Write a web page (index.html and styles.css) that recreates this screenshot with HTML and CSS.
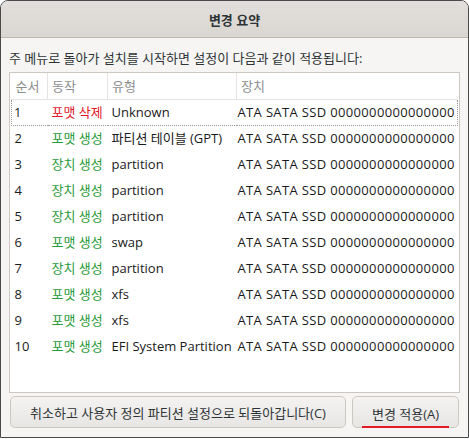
FILE: index.html
```html
<!DOCTYPE html>
<html lang="ko">
<head>
<meta charset="utf-8">
<link rel="stylesheet" href="styles.css">
</head>
<body>
<div class="window">
  <div class="titlebar">변경 요약</div>
  <div class="content">
    <div class="label">주 메뉴로 돌아가 설치를 시작하면 설정이 다음과 같이 적용됩니다:</div>
    <div class="list">
      <table class="tbl">
        <colgroup><col class="c1"><col class="c2"><col class="c3"><col class="c4"></colgroup>
        <thead>
          <tr><th>순서</th><th>동작</th><th>유형</th><th class="last">장치</th></tr>
        </thead>
        <tbody>
          <tr class="focus"><td>1</td><td class="red">포맷 삭제</td><td>Unknown</td><td class="dev">ATA SATA SSD 0000000000000000</td></tr>
          <tr><td>2</td><td class="green">포맷 생성</td><td>파티션 테이블 (GPT)</td><td class="dev">ATA SATA SSD 0000000000000000</td></tr>
          <tr><td>3</td><td class="green">장치 생성</td><td>partition</td><td class="dev">ATA SATA SSD 0000000000000000</td></tr>
          <tr><td>4</td><td class="green">장치 생성</td><td>partition</td><td class="dev">ATA SATA SSD 0000000000000000</td></tr>
          <tr><td>5</td><td class="green">장치 생성</td><td>partition</td><td class="dev">ATA SATA SSD 0000000000000000</td></tr>
          <tr><td>6</td><td class="green">포맷 생성</td><td>swap</td><td class="dev">ATA SATA SSD 0000000000000000</td></tr>
          <tr><td>7</td><td class="green">장치 생성</td><td>partition</td><td class="dev">ATA SATA SSD 0000000000000000</td></tr>
          <tr><td>8</td><td class="green">포맷 생성</td><td>xfs</td><td class="dev">ATA SATA SSD 0000000000000000</td></tr>
          <tr><td>9</td><td class="green">포맷 생성</td><td>xfs</td><td class="dev">ATA SATA SSD 0000000000000000</td></tr>
          <tr><td>10</td><td class="green">포맷 생성</td><td>EFI System Partition</td><td class="dev">ATA SATA SSD 0000000000000000</td></tr>
        </tbody>
      </table>
    </div>
    <div class="buttons">
      <button class="btn btn-cancel">취소하고 사용자 정의 파티션 설정으로 되돌아갑니다(C)</button>
      <button class="btn btn-apply"><span class="u">변경 적용(A)</span></button>
    </div>
  </div>
</div>
</body>
</html>
```
FILE: styles.css
```css
* { box-sizing: border-box; }
html, body { margin: 0; padding: 0; background: #ffffff; }
body {
  font-family: "Open Sans", "Noto Sans CJK KR", sans-serif;
  font-size: 13px;
  color: #2e3436;
}
.window {
  width: 469px;
  height: 438px;
  border: 1px solid #4a4a4a;
  border-radius: 8px 8px 0 0;
  background: #f6f5f4;
  display: flex;
  flex-direction: column;
  overflow: hidden;
}
.titlebar {
  height: 37px;
  flex: none;
  background: linear-gradient(#e1dedb, #dad7d3);
  border-bottom: 1px solid #bfb8b1;
  display: flex;
  align-items: center;
  justify-content: center;
  font-weight: bold;
  font-size: 13px;
  color: #2e3436;
  padding-top: 1px;
}
.content {
  flex: 1;
  display: flex;
  flex-direction: column;
  padding: 10px 8px 9px 8px;
}
.label {
  height: 24px;
  line-height: 18px;
  flex: none;
  padding-top: 1px;
}
.list {
  flex: 1;
  background: #ffffff;
  border: 1px solid #cdc7c2;
  padding: 0 1px;
}
.tbl {
  width: 100%;
  border-collapse: collapse;
  table-layout: fixed;
}
.c1 { width: 36px; }
.c2 { width: 60px; }
.c3 { width: 129px; }
.tbl th {
  height: 26px;
  text-align: left;
  font-weight: normal;
  color: #8b8e8f;
  padding: 0 4px;
  border-right: 1px solid #e6e3e0;
  border-bottom: 1px solid #e6e3e0;
  white-space: nowrap;
}
.tbl th.last { border-right: none; }
.tbl td {
  height: 26px;
  padding: 0 4px 1px 4px;
  white-space: nowrap;
  overflow: visible;
  color: #1a1a1a;
}
.tbl td:first-child { padding-left: 3px; }
.tbl td.dev { padding-left: 1px; letter-spacing: 0.35px; }
.tbl tr.focus td {
  border-top: 1px dotted #9a9a9a;
  border-bottom: 1px dotted #9a9a9a;
}
.tbl tr.focus td:first-child { border-left: 1px dotted #9a9a9a; padding-left: 2px; }
.tbl tr.focus td:last-child { border-right: 1px dotted #9a9a9a; }
.tbl td.red { color: #e0182a; }
.tbl td.green { color: #2a9a3a; }
.buttons {
  flex: none;
  display: flex;
  gap: 6px;
  padding-top: 3px;
  padding-left: 1px;
}
.btn {
  font-family: inherit;
  font-size: 13px;
  color: #2e3436;
  height: 32px;
  border: 1px solid #cdc7c2;
  border-radius: 5px;
  background: linear-gradient(#f4f3f2, #e8e6e3);
  padding: 0;
  white-space: nowrap;
}
.btn-cancel { width: 336px; }
.btn-apply { width: 107px; }
.u {
  display: inline-block;
  border-bottom: 2px solid #e01b24;
  padding: 0 10px 3px 10px;
  margin-top: 7px;
}
```
